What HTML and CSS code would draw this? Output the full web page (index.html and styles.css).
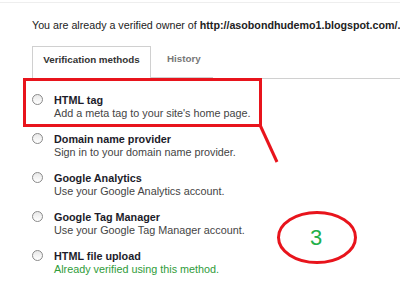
FILE: index.html
```html
<!DOCTYPE html>
<html lang="en">
<head>
    <meta charset="UTF-8">
    <meta name="viewport" content="width=device-width, initial-scale=1.0">
    <title>Verification</title>
    <link rel="stylesheet" href="styles.css">
</head>
<body>
    <div class="page">
        <div class="owner">
            You are already a verified owner of <b>http://asobondhudemo1.blogspot.com/.</b>
        </div>
        <div class="tabs">
            <div class="tab tab-active">Verification methods</div>
            <div class="tab">History</div>
            <div class="tab-rest"></div>
        </div>
        <div class="methods">
            <div class="method">
                <span class="radio"></span>
                <div class="method-text">
                    <div class="method-title">HTML tag</div>
                    <div class="method-desc">Add a meta tag to your site's home page.</div>
                </div>
            </div>
            <div class="method">
                <span class="radio"></span>
                <div class="method-text">
                    <div class="method-title">Domain name provider</div>
                    <div class="method-desc">Sign in to your domain name provider.</div>
                </div>
            </div>
            <div class="method">
                <span class="radio"></span>
                <div class="method-text">
                    <div class="method-title">Google Analytics</div>
                    <div class="method-desc">Use your Google Analytics account.</div>
                </div>
            </div>
            <div class="method">
                <span class="radio"></span>
                <div class="method-text">
                    <div class="method-title">Google Tag Manager</div>
                    <div class="method-desc">Use your Google Tag Manager account.</div>
                </div>
            </div>
            <div class="method">
                <span class="radio"></span>
                <div class="method-text">
                    <div class="method-title">HTML file upload</div>
                    <div class="method-desc method-done">Already verified using this method.</div>
                </div>
            </div>
        </div>
    </div>
    <!-- annotation drawn over the screenshot -->
    <div class="mark-box"></div>
    <svg class="mark-svg" width="400" height="283" viewBox="0 0 400 283">
        <line x1="260" y1="125" x2="277" y2="162" stroke="#e8141c" stroke-width="3"/>
        <ellipse cx="317" cy="237.5" rx="38.5" ry="25" fill="none" stroke="#e8141c" stroke-width="3"/>
    </svg>
    <div class="mark-num">3</div>
</body>
</html>
```

FILE: styles.css
```css
body{
    margin: 0;
    background-color: white;
    font-family: "Liberation Sans", Arial, sans-serif;
    color: #222;
}
.page{
    margin-top: 2px;
    border-top: 1px solid #eeeeee;
    padding-left: 32px;
}
.owner{
    font-size: 10.7px;
    line-height: 15px;
    margin-top: 15px;
    color: #222;
    white-space: nowrap;
}
.tabs{
    display: flex;
    margin-top: 13px;
}
.tab{
    font-size: 9.8px;
    font-weight: bold;
    color: #777;
    padding: 6px 12px 0 16px;
    height: 25px;
    line-height: 13px;
    white-space: nowrap;
    border-bottom: 1px solid #d0d0d0;
}
.tab-active{
    color: #333;
    width: 117px;
    padding: 6px 0 0 0;
    border: 1px solid #d0d0d0;
    border-bottom: 1px solid white;
    text-align: center;
}
.tab-rest{
    flex: 1;
    border-bottom: 1px solid #d0d0d0;
}
.methods{
    padding-top: 15px;
}
.method{
    display: flex;
    gap: 11px;
    margin-bottom: 13px;
}
.radio{
    width: 9px;
    height: 9px;
    margin-top: 0px;
    border: 1px solid #8a8a8a;
    border-radius: 50%;
    background: linear-gradient(#e8e8e8, #ffffff);
}
.method-title{
    font-size: 10.8px;
    font-weight: bold;
    line-height: 13px;
    color: #1c1c2a;
}
.method-desc{
    font-size: 10.8px;
    line-height: 13px;
    color: #444;
}
.method-done{
    color: #2f9c3a;
}
.mark-box{
    position: absolute;
    left: 23px;
    top: 78px;
    width: 233px;
    height: 43px;
    border: 3px solid #e8141c;
}
.mark-svg{
    position: absolute;
    left: 0;
    top: 0;
}
.mark-num{
    position: absolute;
    left: 310px;
    top: 225px;
    font-size: 22px;
    color: #22b04a;
}
```
